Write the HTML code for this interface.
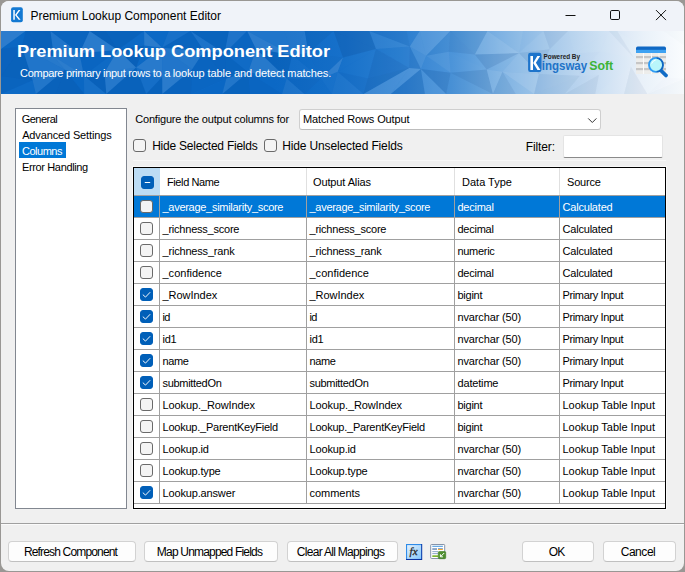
<!DOCTYPE html>
<html><head><meta charset="utf-8"><title>Premium Lookup Component Editor</title>
<style>
html,body{margin:0;padding:0}
body{width:685px;height:572px;overflow:hidden;background:#999794;font-family:"Liberation Sans",sans-serif;font-size:11px;color:#000;position:relative}
.abs{position:absolute}
#win{position:absolute;left:1px;top:1px;width:683px;height:570px;background:#f0f0f0;border-radius:8px;overflow:hidden}
#tb{position:absolute;left:0;top:0;width:683px;height:30px;background:#f0f3f9}
#banner{position:absolute;left:0;top:30px;width:683px;height:63px;background:linear-gradient(90deg,#0b68c5 0%,#0b68c5 40%,#1670ca 50%,#2b7fd1 58.5%,#4a93d9 66%,#7ab0e2 73%,#a9cbeb 81%,#cde0f3 88%,#e9f1f9 94%,#fafcfe 100%);overflow:hidden}
#banner h1{position:absolute;margin:0;font-size:17px;line-height:20px;font-weight:bold;color:#fff;white-space:nowrap}
#banner p{position:absolute;margin:0;font-size:11px;line-height:13px;color:#fff;white-space:nowrap}
#nav{position:absolute;left:14px;top:107px;width:110px;height:399px;background:#fff;border:1px solid #828790}
.lbl{position:absolute;white-space:nowrap}
.cb{display:block;position:absolute;width:11px;height:11px;border:1px solid #6a6a6a;border-radius:3px;background:#f4f4f4}
.cb.on{background:#005fb8;border-color:#005fb8}
.cb svg{position:absolute;left:-1px;top:-1px;width:13px;height:13px}
#sel{position:absolute;left:298px;top:108px;width:300px;height:19px;background:#fff;border:1px solid #cfcfcf;border-bottom-color:#bdbdbd;border-radius:3px}
#flt{position:absolute;left:562px;top:134px;width:98px;height:21px;background:#fff;border:1px solid #e4e4e4;border-bottom:1px solid #8a8a8a;border-radius:2px}
#grid{position:absolute;left:132px;top:166px;width:531px;height:340px;border:1px solid #000;background:#fff;overflow:hidden;box-shadow:0 0 0 1px #f9f9f9}
#grid .hd{position:absolute;left:0;top:0;height:27px;width:531px;border-bottom:1px solid #a0a0a0}
#grid .hd div{position:absolute;top:0;height:27px;line-height:29px;font-size:11px;white-space:nowrap;box-sizing:border-box}
.r{position:absolute;left:0;width:531px;height:21px;border-bottom:1px solid #a0a0a0}
.r .c{position:absolute;top:0;height:21px;line-height:21px;white-space:nowrap;overflow:hidden;border-right:1px solid #a0a0a0;padding-left:2.5px;padding-top:1px;box-sizing:border-box;font-size:11px}
.c0{left:0;width:26px} .c1{left:26px;width:147px} .c2{left:173px;width:148px} .c3{left:321px;width:105px} .c4{left:426px;width:105px;border-right:none!important}
.r .c0 .cb{left:6px;top:4px}
.r.sel{background:#0078d7;color:#fff}
.btn{position:absolute;top:540px;height:19px;border:1px solid #d2d2d2;border-bottom-color:#c0c0c0;border-radius:4px;background:#fdfdfd;text-align:center;line-height:20px;font-size:12px;white-space:nowrap;padding-right:3px;box-sizing:content-box}
</style></head><body>
<div id="win">
 <div id="tb">
  <svg class="abs" style="left:9px;top:6px" width="16" height="18" viewBox="0 0 16 18"><rect x="1.100" y="0.300" width="11.700" height="14.900" rx="2" fill="#1479d2"/><path d="M3.300 3h1.500v9.800H3.300z M5 8 L8.600 3h1.800L6.700 7.900l3.900 4.900H8.700z" fill="#fff"/></svg>
  <div class="lbl" style="left:29.46px;top:8px;font-size:12px;line-height:15px;letter-spacing:-0.006px;">Premium Lookup Component Editor</div>
  <svg class="abs" style="left:560px;top:0" width="123" height="30" viewBox="0 0 123 30"><g fill="none" stroke="#111" stroke-width="1"><path d="M4.500 14.500h10"/><rect x="49.500" y="9.500" width="9" height="9" rx="1.300"/><path d="M95 9.100l10 10M105 9.100l-10 10"/></g></svg>
 </div>
 <div id="banner">
  <svg class="abs" style="left:0;top:0" width="683" height="63" viewBox="0 0 683 63">
   <polygon points="0.0,0.0 24.6,0.0 0.0,17.9" fill="#fff" opacity="0.138"/>
   <polygon points="24.6,0.0 20.8,15.4 0.0,17.9" fill="#00306a" opacity="0.010"/>
   <polygon points="24.6,0.0 49.4,0.0 52.8,25.6" fill="#00306a" opacity="0.116"/>
   <polygon points="24.6,0.0 52.8,25.6 20.8,15.4" fill="#00306a" opacity="0.111"/>
   <polygon points="49.4,0.0 88.6,0.0 78.5,22.2" fill="#00306a" opacity="0.066"/>
   <polygon points="49.4,0.0 78.5,22.2 52.8,25.6" fill="#fff" opacity="0.092"/>
   <polygon points="88.6,0.0 104.6,0.0 116.8,19.1" fill="#00306a" opacity="0.134"/>
   <polygon points="88.6,0.0 116.8,19.1 78.5,22.2" fill="#fff" opacity="0.126"/>
   <polygon points="104.6,0.0 143.1,0.0 116.8,19.1" fill="#00306a" opacity="0.099"/>
   <polygon points="143.1,0.0 143.3,14.6 116.8,19.1" fill="#fff" opacity="0.012"/>
   <polygon points="143.1,0.0 167.8,0.0 161.2,16.7" fill="#fff" opacity="0.008"/>
   <polygon points="143.1,0.0 161.2,16.7 143.3,14.6" fill="#fff" opacity="0.134"/>
   <polygon points="167.8,0.0 189.6,0.0 161.2,16.7" fill="#fff" opacity="0.055"/>
   <polygon points="189.6,0.0 203.1,19.9 161.2,16.7" fill="#00306a" opacity="0.067"/>
   <polygon points="189.6,0.0 227.8,0.0 223.6,22.3" fill="#00306a" opacity="0.093"/>
   <polygon points="189.6,0.0 223.6,22.3 203.1,19.9" fill="#fff" opacity="0.076"/>
   <polygon points="227.8,0.0 246.1,0.0 223.6,22.3" fill="#fff" opacity="0.078"/>
   <polygon points="246.1,0.0 255.1,18.1 223.6,22.3" fill="#00306a" opacity="0.048"/>
   <polygon points="246.1,0.0 283.1,0.0 291.0,23.9" fill="#fff" opacity="0.087"/>
   <polygon points="246.1,0.0 291.0,23.9 255.1,18.1" fill="#fff" opacity="0.136"/>
   <polygon points="283.1,0.0 303.7,0.0 291.0,23.9" fill="#fff" opacity="0.086"/>
   <polygon points="303.7,0.0 307.5,22.1 291.0,23.9" fill="#fff" opacity="0.089"/>
   <polygon points="303.7,0.0 332.6,0.0 307.5,22.1" fill="#00306a" opacity="0.077"/>
   <polygon points="332.6,0.0 342.0,26.5 307.5,22.1" fill="#fff" opacity="0.005"/>
   <polygon points="332.6,0.0 368.3,0.0 374.9,17.9" fill="#00306a" opacity="0.132"/>
   <polygon points="332.6,0.0 374.9,17.9 342.0,26.5" fill="#00306a" opacity="0.132"/>
   <polygon points="368.3,0.0 405.5,0.0 408.8,15.4" fill="#00306a" opacity="0.067"/>
   <polygon points="368.3,0.0 408.8,15.4 374.9,17.9" fill="#fff" opacity="0.054"/>
   <polygon points="405.5,0.0 418.7,0.0 408.8,15.4" fill="#00306a" opacity="0.015"/>
   <polygon points="418.7,0.0 425.1,24.8 408.8,15.4" fill="#fff" opacity="0.122"/>
   <polygon points="418.7,0.0 449.3,0.0 425.1,24.8" fill="#fff" opacity="0.127"/>
   <polygon points="449.3,0.0 447.8,20.8 425.1,24.8" fill="#00306a" opacity="0.038"/>
   <polygon points="449.3,0.0 486.5,0.0 473.8,23.5" fill="#00306a" opacity="0.076"/>
   <polygon points="449.3,0.0 473.8,23.5 447.8,20.8" fill="#00306a" opacity="0.085"/>
   <polygon points="486.5,0.0 521.9,0.0 518.0,22.1" fill="#fff" opacity="0.035"/>
   <polygon points="486.5,0.0 518.0,22.1 473.8,23.5" fill="#fff" opacity="0.112"/>
   <polygon points="521.9,0.0 542.4,0.0 518.0,22.1" fill="#00306a" opacity="0.006"/>
   <polygon points="542.4,0.0 548.8,18.3 518.0,22.1" fill="#fff" opacity="0.043"/>
   <polygon points="542.4,0.0 566.9,0.0 548.8,18.3" fill="#00306a" opacity="0.050"/>
   <polygon points="566.9,0.0 573.4,22.4 548.8,18.3" fill="#fff" opacity="0.019"/>
   <polygon points="566.9,0.0 607.9,0.0 573.4,22.4" fill="#fff" opacity="0.034"/>
   <polygon points="607.9,0.0 599.4,20.4 573.4,22.4" fill="#fff" opacity="0.030"/>
   <polygon points="607.9,0.0 616.3,0.0 633.4,27.5" fill="#00306a" opacity="0.039"/>
   <polygon points="607.9,0.0 633.4,27.5 599.4,20.4" fill="#fff" opacity="0.035"/>
   <polygon points="616.3,0.0 662.3,0.0 654.0,23.4" fill="#fff" opacity="0.036"/>
   <polygon points="616.3,0.0 654.0,23.4 633.4,27.5" fill="#fff" opacity="0.057"/>
   <polygon points="662.3,0.0 683.0,0.0 683.0,14.5" fill="#00306a" opacity="0.012"/>
   <polygon points="662.3,0.0 683.0,14.5 654.0,23.4" fill="#fff" opacity="0.054"/>
   <polygon points="0.0,17.9 20.8,15.4 0.0,45.0" fill="#00306a" opacity="0.092"/>
   <polygon points="20.8,15.4 31.6,49.2 0.0,45.0" fill="#00306a" opacity="0.104"/>
   <polygon points="20.8,15.4 52.8,25.6 63.9,38.8" fill="#fff" opacity="0.113"/>
   <polygon points="20.8,15.4 63.9,38.8 31.6,49.2" fill="#fff" opacity="0.086"/>
   <polygon points="52.8,25.6 78.5,22.2 82.9,44.5" fill="#fff" opacity="0.091"/>
   <polygon points="52.8,25.6 82.9,44.5 63.9,38.8" fill="#fff" opacity="0.134"/>
   <polygon points="78.5,22.2 116.8,19.1 82.9,44.5" fill="#00306a" opacity="0.042"/>
   <polygon points="116.8,19.1 103.5,41.4 82.9,44.5" fill="#fff" opacity="0.014"/>
   <polygon points="116.8,19.1 143.3,14.6 135.1,36.4" fill="#00306a" opacity="0.136"/>
   <polygon points="116.8,19.1 135.1,36.4 103.5,41.4" fill="#fff" opacity="0.132"/>
   <polygon points="143.3,14.6 161.2,16.7 135.1,36.4" fill="#fff" opacity="0.007"/>
   <polygon points="161.2,16.7 161.2,45.9 135.1,36.4" fill="#fff" opacity="0.121"/>
   <polygon points="161.2,16.7 203.1,19.9 191.2,38.3" fill="#fff" opacity="0.104"/>
   <polygon points="161.2,16.7 191.2,38.3 161.2,45.9" fill="#fff" opacity="0.091"/>
   <polygon points="203.1,19.9 223.6,22.3 225.3,47.5" fill="#00306a" opacity="0.069"/>
   <polygon points="203.1,19.9 225.3,47.5 191.2,38.3" fill="#00306a" opacity="0.058"/>
   <polygon points="223.6,22.3 255.1,18.1 247.1,41.3" fill="#fff" opacity="0.024"/>
   <polygon points="223.6,22.3 247.1,41.3 225.3,47.5" fill="#00306a" opacity="0.067"/>
   <polygon points="255.1,18.1 291.0,23.9 285.7,47.6" fill="#00306a" opacity="0.103"/>
   <polygon points="255.1,18.1 285.7,47.6 247.1,41.3" fill="#fff" opacity="0.115"/>
   <polygon points="291.0,23.9 307.5,22.1 319.9,47.4" fill="#00306a" opacity="0.012"/>
   <polygon points="291.0,23.9 319.9,47.4 285.7,47.6" fill="#fff" opacity="0.023"/>
   <polygon points="307.5,22.1 342.0,26.5 319.9,47.4" fill="#00306a" opacity="0.022"/>
   <polygon points="342.0,26.5 336.7,40.8 319.9,47.4" fill="#fff" opacity="0.117"/>
   <polygon points="342.0,26.5 374.9,17.9 336.7,40.8" fill="#fff" opacity="0.009"/>
   <polygon points="374.9,17.9 366.9,47.6 336.7,40.8" fill="#fff" opacity="0.007"/>
   <polygon points="374.9,17.9 408.8,15.4 408.3,36.9" fill="#00306a" opacity="0.017"/>
   <polygon points="374.9,17.9 408.3,36.9 366.9,47.6" fill="#00306a" opacity="0.089"/>
   <polygon points="408.8,15.4 425.1,24.8 419.9,38.1" fill="#fff" opacity="0.084"/>
   <polygon points="408.8,15.4 419.9,38.1 408.3,36.9" fill="#00306a" opacity="0.092"/>
   <polygon points="425.1,24.8 447.8,20.8 449.6,41.8" fill="#fff" opacity="0.063"/>
   <polygon points="425.1,24.8 449.6,41.8 419.9,38.1" fill="#fff" opacity="0.016"/>
   <polygon points="447.8,20.8 473.8,23.5 485.7,38.5" fill="#fff" opacity="0.005"/>
   <polygon points="447.8,20.8 485.7,38.5 449.6,41.8" fill="#fff" opacity="0.016"/>
   <polygon points="473.8,23.5 518.0,22.1 485.7,38.5" fill="#00306a" opacity="0.110"/>
   <polygon points="518.0,22.1 501.5,40.8 485.7,38.5" fill="#fff" opacity="0.017"/>
   <polygon points="518.0,22.1 548.8,18.3 537.9,43.0" fill="#00306a" opacity="0.062"/>
   <polygon points="518.0,22.1 537.9,43.0 501.5,40.8" fill="#fff" opacity="0.076"/>
   <polygon points="548.8,18.3 573.4,22.4 537.9,43.0" fill="#fff" opacity="0.007"/>
   <polygon points="573.4,22.4 579.0,44.8 537.9,43.0" fill="#fff" opacity="0.031"/>
   <polygon points="573.4,22.4 599.4,20.4 579.0,44.8" fill="#00306a" opacity="0.007"/>
   <polygon points="599.4,20.4 598.0,43.7 579.0,44.8" fill="#fff" opacity="0.014"/>
   <polygon points="599.4,20.4 633.4,27.5 598.0,43.7" fill="#fff" opacity="0.001"/>
   <polygon points="633.4,27.5 629.9,35.4 598.0,43.7" fill="#fff" opacity="0.023"/>
   <polygon points="633.4,27.5 654.0,23.4 663.2,46.1" fill="#fff" opacity="0.004"/>
   <polygon points="633.4,27.5 663.2,46.1 629.9,35.4" fill="#00306a" opacity="0.003"/>
   <polygon points="654.0,23.4 683.0,14.5 663.2,46.1" fill="#fff" opacity="0.024"/>
   <polygon points="683.0,14.5 683.0,47.5 663.2,46.1" fill="#fff" opacity="0.045"/>
   <polygon points="0.0,45.0 31.6,49.2 0.0,63.0" fill="#00306a" opacity="0.067"/>
   <polygon points="31.6,49.2 34.9,63.0 0.0,63.0" fill="#fff" opacity="0.017"/>
   <polygon points="31.6,49.2 63.9,38.8 34.9,63.0" fill="#fff" opacity="0.095"/>
   <polygon points="63.9,38.8 54.6,63.0 34.9,63.0" fill="#00306a" opacity="0.102"/>
   <polygon points="63.9,38.8 82.9,44.5 83.2,63.0" fill="#00306a" opacity="0.016"/>
   <polygon points="63.9,38.8 83.2,63.0 54.6,63.0" fill="#00306a" opacity="0.120"/>
   <polygon points="82.9,44.5 103.5,41.4 105.3,63.0" fill="#00306a" opacity="0.120"/>
   <polygon points="82.9,44.5 105.3,63.0 83.2,63.0" fill="#fff" opacity="0.047"/>
   <polygon points="103.5,41.4 135.1,36.4 105.3,63.0" fill="#fff" opacity="0.111"/>
   <polygon points="135.1,36.4 145.2,63.0 105.3,63.0" fill="#00306a" opacity="0.097"/>
   <polygon points="135.1,36.4 161.2,45.9 145.2,63.0" fill="#fff" opacity="0.045"/>
   <polygon points="161.2,45.9 161.3,63.0 145.2,63.0" fill="#00306a" opacity="0.100"/>
   <polygon points="161.2,45.9 191.2,38.3 161.3,63.0" fill="#fff" opacity="0.131"/>
   <polygon points="191.2,38.3 189.9,63.0 161.3,63.0" fill="#00306a" opacity="0.079"/>
   <polygon points="191.2,38.3 225.3,47.5 189.9,63.0" fill="#00306a" opacity="0.028"/>
   <polygon points="225.3,47.5 221.4,63.0 189.9,63.0" fill="#00306a" opacity="0.004"/>
   <polygon points="225.3,47.5 247.1,41.3 221.4,63.0" fill="#fff" opacity="0.093"/>
   <polygon points="247.1,41.3 248.8,63.0 221.4,63.0" fill="#00306a" opacity="0.095"/>
   <polygon points="247.1,41.3 285.7,47.6 281.1,63.0" fill="#fff" opacity="0.004"/>
   <polygon points="247.1,41.3 281.1,63.0 248.8,63.0" fill="#00306a" opacity="0.045"/>
   <polygon points="285.7,47.6 319.9,47.4 303.4,63.0" fill="#00306a" opacity="0.051"/>
   <polygon points="285.7,47.6 303.4,63.0 281.1,63.0" fill="#fff" opacity="0.062"/>
   <polygon points="319.9,47.4 336.7,40.8 330.7,63.0" fill="#fff" opacity="0.015"/>
   <polygon points="319.9,47.4 330.7,63.0 303.4,63.0" fill="#00306a" opacity="0.017"/>
   <polygon points="336.7,40.8 366.9,47.6 362.4,63.0" fill="#00306a" opacity="0.047"/>
   <polygon points="336.7,40.8 362.4,63.0 330.7,63.0" fill="#fff" opacity="0.035"/>
   <polygon points="366.9,47.6 408.3,36.9 362.4,63.0" fill="#00306a" opacity="0.122"/>
   <polygon points="408.3,36.9 389.8,63.0 362.4,63.0" fill="#fff" opacity="0.136"/>
   <polygon points="408.3,36.9 419.9,38.1 389.8,63.0" fill="#fff" opacity="0.132"/>
   <polygon points="419.9,38.1 423.9,63.0 389.8,63.0" fill="#00306a" opacity="0.111"/>
   <polygon points="419.9,38.1 449.6,41.8 445.1,63.0" fill="#00306a" opacity="0.129"/>
   <polygon points="419.9,38.1 445.1,63.0 423.9,63.0" fill="#fff" opacity="0.078"/>
   <polygon points="449.6,41.8 485.7,38.5 491.9,63.0" fill="#00306a" opacity="0.104"/>
   <polygon points="449.6,41.8 491.9,63.0 445.1,63.0" fill="#00306a" opacity="0.022"/>
   <polygon points="485.7,38.5 501.5,40.8 491.9,63.0" fill="#fff" opacity="0.089"/>
   <polygon points="501.5,40.8 514.7,63.0 491.9,63.0" fill="#00306a" opacity="0.068"/>
   <polygon points="501.5,40.8 537.9,43.0 533.1,63.0" fill="#fff" opacity="0.117"/>
   <polygon points="501.5,40.8 533.1,63.0 514.7,63.0" fill="#fff" opacity="0.020"/>
   <polygon points="537.9,43.0 579.0,44.8 533.1,63.0" fill="#00306a" opacity="0.049"/>
   <polygon points="579.0,44.8 563.8,63.0 533.1,63.0" fill="#00306a" opacity="0.053"/>
   <polygon points="579.0,44.8 598.0,43.7 563.8,63.0" fill="#00306a" opacity="0.009"/>
   <polygon points="598.0,43.7 594.3,63.0 563.8,63.0" fill="#00306a" opacity="0.051"/>
   <polygon points="598.0,43.7 629.9,35.4 594.3,63.0" fill="#fff" opacity="0.016"/>
   <polygon points="629.9,35.4 623.1,63.0 594.3,63.0" fill="#fff" opacity="0.036"/>
   <polygon points="629.9,35.4 663.2,46.1 646.4,63.0" fill="#fff" opacity="0.043"/>
   <polygon points="629.9,35.4 646.4,63.0 623.1,63.0" fill="#00306a" opacity="0.052"/>
   <polygon points="663.2,46.1 683.0,47.5 646.4,63.0" fill="#00306a" opacity="0.006"/>
   <polygon points="683.0,47.5 683.0,63.0 646.4,63.0" fill="#00306a" opacity="0.019"/>
  </svg>
  <h1 style="left:16.2px;top:11px;transform-origin:0 0;transform:scaleX(1.0726)">Premium Lookup Component Editor</h1>
  <p style="left:19.1px;top:36px"><span style="letter-spacing:-0.313px">Compare primary input rows to a </span><span style="letter-spacing:-0.092px">lookup table and detect matches.</span></p>
  <svg class="abs" style="left:526px;top:20px" width="92" height="26" viewBox="0 0 92 26">
   <rect x="1.100" y="1.800" width="13.400" height="19.200" rx="2.200" fill="#1d74cb"/>
   <path d="M3.400 5h2.600v14h-2.600z M6.200 12 L10.300 5h2.900L8.900 11.800l4.600 7.200H10.500z" fill="#fff"/>
   <text x="16.500" y="8.300" font-family="Liberation Sans, sans-serif" font-size="7.500" font-weight="bold" fill="#222" textLength="36.500" lengthAdjust="spacingAndGlyphs">Powered By</text>
   <text x="14.700" y="18.500" font-family="Liberation Sans, sans-serif" font-size="12.800" font-weight="bold" fill="#2173c8" textLength="45.500" lengthAdjust="spacingAndGlyphs">ingsway</text>
   <text x="62.200" y="18.500" font-family="Liberation Sans, sans-serif" font-size="12.800" font-weight="bold" fill="#3db436" textLength="24" lengthAdjust="spacingAndGlyphs">Soft</text>
  </svg>
  <svg class="abs" style="left:633px;top:13.2px" width="38" height="36" viewBox="0 0 38 36">
   <defs><linearGradient id="rg" x1="0" x2="1"><stop offset="0" stop-color="#2f9bf4"/><stop offset="0.500" stop-color="#2f9bf4"/><stop offset="0.600" stop-color="#0d67c3"/><stop offset="1" stop-color="#0d67c3"/></linearGradient></defs>
   <path d="M2 4.200a1.700 1.700 0 0 1 1.700-1.700h26.600a1.700 1.700 0 0 1 1.700 1.700V6H2z" fill="#0f68c4"/>
   <rect x="2" y="5.800" width="30" height="3.400" fill="#3ea2f2"/>
   <rect x="2" y="9" width="30" height="21" fill="#ededeb"/>
   <g fill="#c6c6c6"><rect x="2" y="12" width="30" height="2.200"/><rect x="2" y="18" width="30" height="2.200"/><rect x="2" y="24" width="30" height="2.200"/></g>
   <g fill="#fafafa"><rect x="9" y="9" width="1" height="21"/><rect x="17" y="9" width="1" height="21"/><rect x="24.500" y="9" width="1" height="21"/></g>
   <path d="M26.500 26 L32 31.500" stroke="#0f6bc6" stroke-width="3.800" stroke-linecap="round"/>
   <circle cx="22" cy="20.900" r="7" fill="#b9f6fb" stroke="url(#rg)" stroke-width="1.900"/>
   <path d="M17.800 19.300a4.800 4.800 0 0 1 3.600-3.300" fill="none" stroke="#fff" stroke-width="1" stroke-linecap="round" opacity=".9"/>
  </svg>
 </div>

 <div id="nav">
  <div class="abs" style="left:3px;top:33px;width:47px;height:16px;background:#0078d7"></div>
  <div class="lbl" style="left:5.63px;top:3px;font-size:11px;line-height:14px;letter-spacing:-0.491px;">General</div>
  <div class="lbl" style="left:6.13px;top:19px;font-size:11px;line-height:14px;letter-spacing:-0.134px;">Advanced Settings</div>
  <div class="lbl" style="left:5.93px;top:35px;font-size:11px;line-height:14px;letter-spacing:-0.469px;color:#fff">Columns</div>
  <div class="lbl" style="left:5.93px;top:51px;font-size:11px;line-height:14px;letter-spacing:-0.356px;">Error Handling</div>
 </div>

 <div class="lbl" style="left:134.23px;top:111px;font-size:11px;line-height:14px;letter-spacing:-0.181px;">Configure the output columns for</div>
 <div id="sel"><div class="lbl" style="left:3.03px;top:2px;font-size:11px;line-height:14px;letter-spacing:-0.130px;">Matched Rows Output</div>
  <svg class="abs" style="left:287px;top:6.5px" width="11" height="8" viewBox="0 0 11 8"><path d="M1.200 1.400 L5.300 5.500 L9.400 1.400" fill="none" stroke="#333" stroke-width="1"/></svg></div>
 <span class="cb" style="left:132px;top:138px"></span>
 <div class="lbl" style="left:151.16px;top:138px;font-size:12px;line-height:15px;letter-spacing:-0.236px;">Hide Selected Fields</div>
 <span class="cb" style="left:263px;top:138px"></span>
 <div class="lbl" style="left:281.16px;top:138px;font-size:12px;line-height:15px;letter-spacing:-0.134px;">Hide Unselected Fields</div>
 <div class="lbl" style="left:524.76px;top:139px;font-size:12px;line-height:15px;letter-spacing:-0.120px;">Filter:</div>
 <div id="flt"></div>
 <div class="abs" style="left:132px;top:159px;width:533px;height:1px;background:#f8f8f8"></div>

 <div id="grid">
  <div class="hd">
   <div style="left:0;width:26px;background:#bcdcf4"><span class="cb on" style="left:7px;top:8px"><svg viewBox="0 0 13 13"><path d="M4.200 6.500h4.600" stroke="#fff" stroke-width="1.100" stroke-linecap="round"/></svg></span></div>
   <div style="left:26px;width:147px;border-right:1px solid #e0e0e0;padding-left:7px"><span style="letter-spacing:-0.395px">Field Name</span></div>
   <div style="left:173px;width:148px;border-right:1px solid #e0e0e0;padding-left:6px"><span style="letter-spacing:-0.120px">Output Alias</span></div>
   <div style="left:321px;width:105px;border-right:1px solid #e0e0e0;padding-left:7px"><span style="letter-spacing:0.006px">Data Type</span></div>
   <div style="left:426px;width:105px;padding-left:7px"><span style="letter-spacing:-0.173px">Source</span></div>
  </div>
<div class="r sel" style="top:28px"><div class="c c0"><span class="cb"></span></div><div class="c c1"><span style="letter-spacing:-0.283px">_average_similarity_score</span></div><div class="c c2"><span style="letter-spacing:-0.283px">_average_similarity_score</span></div><div class="c c3"><span style="letter-spacing:-0.253px">decimal</span></div><div class="c c4"><span style="letter-spacing:-0.199px">Calculated</span></div></div>
<div class="r" style="top:50px"><div class="c c0"><span class="cb"></span></div><div class="c c1"><span style="letter-spacing:-0.222px">_richness_score</span></div><div class="c c2"><span style="letter-spacing:-0.222px">_richness_score</span></div><div class="c c3"><span style="letter-spacing:-0.253px">decimal</span></div><div class="c c4"><span style="letter-spacing:-0.199px">Calculated</span></div></div>
<div class="r" style="top:72px"><div class="c c0"><span class="cb"></span></div><div class="c c1"><span style="letter-spacing:-0.185px">_richness_rank</span></div><div class="c c2"><span style="letter-spacing:-0.185px">_richness_rank</span></div><div class="c c3"><span style="letter-spacing:-0.306px">numeric</span></div><div class="c c4"><span style="letter-spacing:-0.199px">Calculated</span></div></div>
<div class="r" style="top:94px"><div class="c c0"><span class="cb"></span></div><div class="c c1"><span style="letter-spacing:0.006px">_confidence</span></div><div class="c c2"><span style="letter-spacing:0.006px">_confidence</span></div><div class="c c3"><span style="letter-spacing:-0.253px">decimal</span></div><div class="c c4"><span style="letter-spacing:-0.199px">Calculated</span></div></div>
<div class="r" style="top:116px"><div class="c c0"><span class="cb on"><svg viewBox="0 0 13 13"><path d="M3.1 6.9 L5.5 9.1 L9.9 4.5" fill="none" stroke="#fff" stroke-width="0.95" stroke-linecap="round" stroke-linejoin="round"/></svg></span></div><div class="c c1"><span style="letter-spacing:-0.030px">_RowIndex</span></div><div class="c c2"><span style="letter-spacing:-0.030px">_RowIndex</span></div><div class="c c3"><span style="letter-spacing:-0.262px">bigint</span></div><div class="c c4"><span style="letter-spacing:-0.368px">Primary Input</span></div></div>
<div class="r" style="top:138px"><div class="c c0"><span class="cb on"><svg viewBox="0 0 13 13"><path d="M3.1 6.9 L5.5 9.1 L9.9 4.5" fill="none" stroke="#fff" stroke-width="0.95" stroke-linecap="round" stroke-linejoin="round"/></svg></span></div><div class="c c1"><span style="letter-spacing:-0.772px">id</span></div><div class="c c2"><span style="letter-spacing:-0.772px">id</span></div><div class="c c3"><span style="letter-spacing:-0.144px">nvarchar (50)</span></div><div class="c c4"><span style="letter-spacing:-0.368px">Primary Input</span></div></div>
<div class="r" style="top:160px"><div class="c c0"><span class="cb on"><svg viewBox="0 0 13 13"><path d="M3.1 6.9 L5.5 9.1 L9.9 4.5" fill="none" stroke="#fff" stroke-width="0.95" stroke-linecap="round" stroke-linejoin="round"/></svg></span></div><div class="c c1"><span style="letter-spacing:-0.245px">id1</span></div><div class="c c2"><span style="letter-spacing:-0.245px">id1</span></div><div class="c c3"><span style="letter-spacing:-0.144px">nvarchar (50)</span></div><div class="c c4"><span style="letter-spacing:-0.368px">Primary Input</span></div></div>
<div class="r" style="top:182px"><div class="c c0"><span class="cb on"><svg viewBox="0 0 13 13"><path d="M3.1 6.9 L5.5 9.1 L9.9 4.5" fill="none" stroke="#fff" stroke-width="0.95" stroke-linecap="round" stroke-linejoin="round"/></svg></span></div><div class="c c1"><span style="letter-spacing:-0.342px">name</span></div><div class="c c2"><span style="letter-spacing:-0.342px">name</span></div><div class="c c3"><span style="letter-spacing:-0.144px">nvarchar (50)</span></div><div class="c c4"><span style="letter-spacing:-0.368px">Primary Input</span></div></div>
<div class="r" style="top:204px"><div class="c c0"><span class="cb on"><svg viewBox="0 0 13 13"><path d="M3.1 6.9 L5.5 9.1 L9.9 4.5" fill="none" stroke="#fff" stroke-width="0.95" stroke-linecap="round" stroke-linejoin="round"/></svg></span></div><div class="c c1"><span style="letter-spacing:-0.307px">submittedOn</span></div><div class="c c2"><span style="letter-spacing:-0.307px">submittedOn</span></div><div class="c c3"><span style="letter-spacing:-0.172px">datetime</span></div><div class="c c4"><span style="letter-spacing:-0.368px">Primary Input</span></div></div>
<div class="r" style="top:226px"><div class="c c0"><span class="cb"></span></div><div class="c c1"><span style="letter-spacing:-0.106px">Lookup._RowIndex</span></div><div class="c c2"><span style="letter-spacing:-0.106px">Lookup._RowIndex</span></div><div class="c c3"><span style="letter-spacing:-0.262px">bigint</span></div><div class="c c4"><span style="letter-spacing:-0.016px">Lookup Table Input</span></div></div>
<div class="r" style="top:248px"><div class="c c0"><span class="cb"></span></div><div class="c c1"><span style="letter-spacing:-0.228px">Lookup._ParentKeyField</span></div><div class="c c2"><span style="letter-spacing:-0.228px">Lookup._ParentKeyField</span></div><div class="c c3"><span style="letter-spacing:-0.262px">bigint</span></div><div class="c c4"><span style="letter-spacing:-0.016px">Lookup Table Input</span></div></div>
<div class="r" style="top:270px"><div class="c c0"><span class="cb"></span></div><div class="c c1"><span style="letter-spacing:-0.152px">Lookup.id</span></div><div class="c c2"><span style="letter-spacing:-0.152px">Lookup.id</span></div><div class="c c3"><span style="letter-spacing:-0.144px">nvarchar (50)</span></div><div class="c c4"><span style="letter-spacing:-0.016px">Lookup Table Input</span></div></div>
<div class="r" style="top:292px"><div class="c c0"><span class="cb"></span></div><div class="c c1"><span style="letter-spacing:-0.175px">Lookup.type</span></div><div class="c c2"><span style="letter-spacing:-0.175px">Lookup.type</span></div><div class="c c3"><span style="letter-spacing:-0.144px">nvarchar (50)</span></div><div class="c c4"><span style="letter-spacing:-0.016px">Lookup Table Input</span></div></div>
<div class="r" style="top:314px"><div class="c c0"><span class="cb on"><svg viewBox="0 0 13 13"><path d="M3.1 6.9 L5.5 9.1 L9.9 4.5" fill="none" stroke="#fff" stroke-width="0.95" stroke-linecap="round" stroke-linejoin="round"/></svg></span></div><div class="c c1"><span style="letter-spacing:-0.151px">Lookup.answer</span></div><div class="c c2"><span style="letter-spacing:-0.035px">comments</span></div><div class="c c3"><span style="letter-spacing:-0.144px">nvarchar (50)</span></div><div class="c c4"><span style="letter-spacing:-0.016px">Lookup Table Input</span></div></div>
 </div>

 <div class="abs" style="left:0;top:522px;width:683px;height:1px;background:#a0a0a0"></div>
 <div class="abs" style="left:0;top:523px;width:683px;height:1px;background:#fbfbfb"></div>

 <div class="btn" style="left:7px;width:123px"><span style="letter-spacing:-0.832px">Refresh Component</span></div>
 <div class="btn" style="left:143px;width:129px"><span style="letter-spacing:-0.814px">Map Unmapped Fields</span></div>
 <div class="btn" style="left:285.5px;width:106px"><span style="letter-spacing:-0.704px">Clear All Mappings</span></div>
 <div class="btn" style="left:521px;width:67px"><span style="letter-spacing:-0.858px">OK</span></div>
 <div class="btn" style="left:602px;width:68px"><span style="letter-spacing:-0.455px">Cancel</span></div>
 <svg class="abs" style="left:404px;top:542px" width="19" height="19" viewBox="0 0 19 19">
  <defs><linearGradient id="fg" x1="0" y1="0" x2="1" y2="1"><stop offset="0" stop-color="#e4f1fd"/><stop offset="0.500" stop-color="#b5dcfb"/><stop offset="1" stop-color="#86c8fb"/></linearGradient></defs>
  <rect x="1" y="1" width="16.200" height="16" fill="#0b32a0"/><rect x="1" y="1" width="15.200" height="15" fill="#2e8be8"/><rect x="2.100" y="2.100" width="14" height="13.800" fill="url(#fg)"/>
  <text x="4.600" y="12" font-family="Liberation Serif, serif" font-style="italic" font-size="11" fill="#2a2a2a" stroke="#2a2a2a" stroke-width=".3">fx</text></svg>
 <svg class="abs" style="left:428px;top:542px" width="20" height="19" viewBox="0 0 20 19">
  <rect x="1.700" y="1.500" width="14" height="14" rx=".8" fill="#fff" stroke="#8593a8" stroke-width="1"/>
  <rect x="3.300" y="2.800" width="10.600" height=".9" fill="#2b86d8"/>
  <rect x="3.300" y="5.100" width="4.700" height="1.900" fill="#8aa3c2"/><rect x="9" y="5.100" width="4.900" height="1" fill="#7aa0cc"/><rect x="9" y="6.100" width="4.900" height=".9" fill="#f4a21c"/>
  <rect x="3.300" y="8.200" width="5.700" height=".9" fill="#7f9fc6"/><rect x="3.300" y="10.200" width="5.700" height=".9" fill="#7f9fc6"/>
  <rect x="3.300" y="12.300" width="5.700" height="1.700" fill="#79b530"/>
  <rect x="9.300" y="8.500" width="7.400" height="7.200" rx="1" fill="#4e8f2f" stroke="#3d7a22" stroke-width=".6"/>
  <path d="M15.200 10 L11.700 13.500 M11.400 11.300v2.500h2.500" fill="none" stroke="#fff" stroke-width="1"/></svg>
</div>
</body></html>
